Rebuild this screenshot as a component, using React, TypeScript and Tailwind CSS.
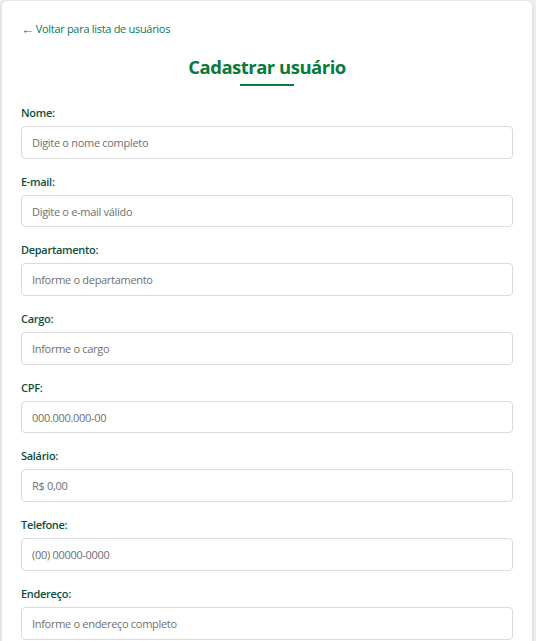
import React from "react";

const fields = [
  { label: "Nome:", ph: "Digite o nome completo" },
  { label: "E-mail:", ph: "Digite o e-mail válido" },
  { label: "Departamento:", ph: "Informe o departamento" },
  { label: "Cargo:", ph: "Informe o cargo" },
  { label: "CPF:", ph: "000.000.000-00" },
  { label: "Salário:", ph: "R$ 0,00" },
  { label: "Telefone:", ph: "(00) 00000-0000" },
  { label: "Endereço:", ph: "Informe o endereço completo" },
];

export default function App() {
  return (
    <div
      className="h-[641px] bg-[#efefef] pl-[1px] pr-[3px] overflow-hidden"
      style={{ fontFamily: '"Open Sans", "Noto Sans", sans-serif' }}
    >
      <div className="bg-white rounded-t-[6px] border border-[#e6e6e6] shadow-sm px-[19px] pt-[19px] pb-[40px] min-h-[700px]">
        <a className="flex items-center text-[11px] leading-[18px] text-[#0b7a56] tracking-[-0.3px]">
          <span className="text-[13px] mr-[2px]">←</span>
          <span>Voltar para lista de usuários</span>
        </a>
        <h1 className="mt-[15px] text-center text-[18.5px] leading-[28px] font-bold text-[#0a7a3c] tracking-[-0.5px]">
          Cadastrar usuário
        </h1>
        <div className="mx-auto mt-[3px] w-[54px] h-[2px] bg-[#0a7a3c]" />
        <div className="mt-[18px]">
          {fields.map((f) => (
            <div key={f.label} className="mb-[14px]">
              <label className="block text-[11px] leading-[18px] font-semibold text-[#0d4f3c] tracking-[-0.3px]">
                {f.label}
              </label>
              <input
                placeholder={f.ph}
                className="mt-[4px] block w-full h-[32.7px] rounded-[4px] border border-[#dadada] px-[10px] text-[11px] tracking-[-0.3px] placeholder:text-[#6f6f6f] outline-none"
              />
            </div>
          ))}
        </div>
      </div>
    </div>
  );
}
